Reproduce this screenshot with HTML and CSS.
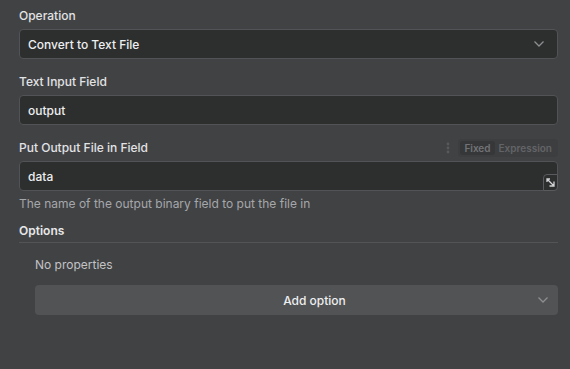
FILE: index.html
```html
<!DOCTYPE html>
<html>
<head>
<meta charset="utf-8">
<link rel="stylesheet" href="styles.css">
</head>
<body>
<div class="panel">
  <div class="param">
    <div class="label-row"><span class="label">Operation</span></div>
    <div class="field select">
      <span class="value">Convert to Text File</span>
      <svg class="chev" width="12" height="8" viewBox="0 0 12 8"><path d="M1.5 1.5 L6 6 L10.5 1.5" fill="none" stroke="#8d8e91" stroke-width="1.3"/></svg>
    </div>
  </div>
  <div class="param">
    <div class="label-row"><span class="label">Text Input Field</span></div>
    <div class="field"><span class="value">output</span></div>
  </div>
  <div class="param">
    <div class="label-row">
      <span class="label">Put Output File in Field</span>
      <div class="toggle-wrap">
        <svg class="dots" width="4" height="12" viewBox="0 0 4 12"><circle cx="2" cy="2" r="1.4" fill="#58595c"/><circle cx="2" cy="6" r="1.4" fill="#58595c"/><circle cx="2" cy="10" r="1.4" fill="#58595c"/></svg>
        <div class="toggle"><span class="seg active">Fixed</span><span class="seg">Expression</span></div>
      </div>
    </div>
    <div class="field relative">
      <span class="value">data</span>
      <div class="expand">
        <svg width="10" height="10" viewBox="0 0 10 10"><path d="M1.5 1.5 L8 8 M8 3.5 L8 8 L3.5 8 M1 4 L1 1 L4 1" fill="none" stroke="#d4d5d7" stroke-width="1.3"/></svg>
      </div>
    </div>
    <div class="hint">The name of the output binary field to put the file in</div>
  </div>
  <div class="options">
    <div class="options-title">Options</div>
    <div class="options-body">
      <div class="noprops">No properties</div>
      <div class="add-btn">
        <span>Add option</span>
        <svg class="chev" width="12" height="8" viewBox="0 0 12 8"><path d="M1.5 1.5 L6 6 L10.5 1.5" fill="none" stroke="#8d8e91" stroke-width="1.3"/></svg>
      </div>
    </div>
  </div>
</div>
</body>
</html>
```

FILE: styles.css
```css
html, body {
  margin: 0;
  padding: 0;
  background: #414244;
  width: 570px;
  height: 369px;
  overflow: hidden;
}
body {
  font-family: Inter, "Noto Sans", "Liberation Sans", sans-serif;
  color: #e4e5e7;
  font-size: 12px;
}
.panel {
  padding: 5px 12px 0 19px;
  display: flex;
  flex-direction: column;
}
.param {
  display: flex;
  flex-direction: column;
  margin-bottom: 12px;
}
.label-row {
  height: 20px;
  display: flex;
  align-items: center;
  justify-content: space-between;
  margin-bottom: 4px;
}
.label {
  font-size: 12px;
  font-weight: 500;
  color: #e2e3e5;
}
.field {
  height: 28px;
  background: #2d2e2e;
  border: 1px solid #525356;
  border-radius: 4px;
  display: flex;
  align-items: center;
  justify-content: space-between;
  padding: 0 12px 0 8px;
}
.relative { position: relative; }
.value {
  font-size: 12px;
  font-weight: 500;
  color: #eeeff0;
}
.chev { display: block; }
.toggle-wrap {
  display: flex;
  align-items: center;
  gap: 8px;
  margin-top: 2px;
}
.toggle {
  display: flex;
  background: #3d3e40;
  border-radius: 4px;
  padding: 2px;
  font-size: 10px;
  font-weight: 600;
}
.seg {
  padding: 1px 4px;
  color: #636467;
  border-radius: 3px;
}
.seg.active {
  background: #363739;
  color: #727376;
}
.expand {
  position: absolute;
  right: -1px;
  bottom: -1px;
  width: 15px;
  height: 17px;
  border: 1px solid #5a5b5e;
  border-radius: 4px 0 4px 0;
  background: #2d2e2e;
  display: flex;
  align-items: center;
  justify-content: center;
  box-sizing: border-box;
}
.hint {
  margin-top: 5px;
  font-size: 12px;
  color: #a5a7ab;
}
.options {
  margin-top: 0;
}
.options-title {
  font-size: 12px;
  font-weight: 600;
  color: #e6e7e9;
  padding-bottom: 4px;
  border-bottom: 1px solid #535456;
}
.options-body {
  padding-left: 16px;
}
.noprops {
  margin-top: 14px;
  color: #c2c3c6;
  font-size: 12px;
}
.add-btn {
  margin-top: 13px;
  height: 30px;
  background: #525355;
  border-radius: 4px;
  position: relative;
  display: flex;
  align-items: center;
  justify-content: center;
  padding-left: 36px;
  font-weight: 500;
  color: #eeeff0;
}
.add-btn .chev {
  position: absolute;
  right: 9px;
  top: 11px;
}
```
